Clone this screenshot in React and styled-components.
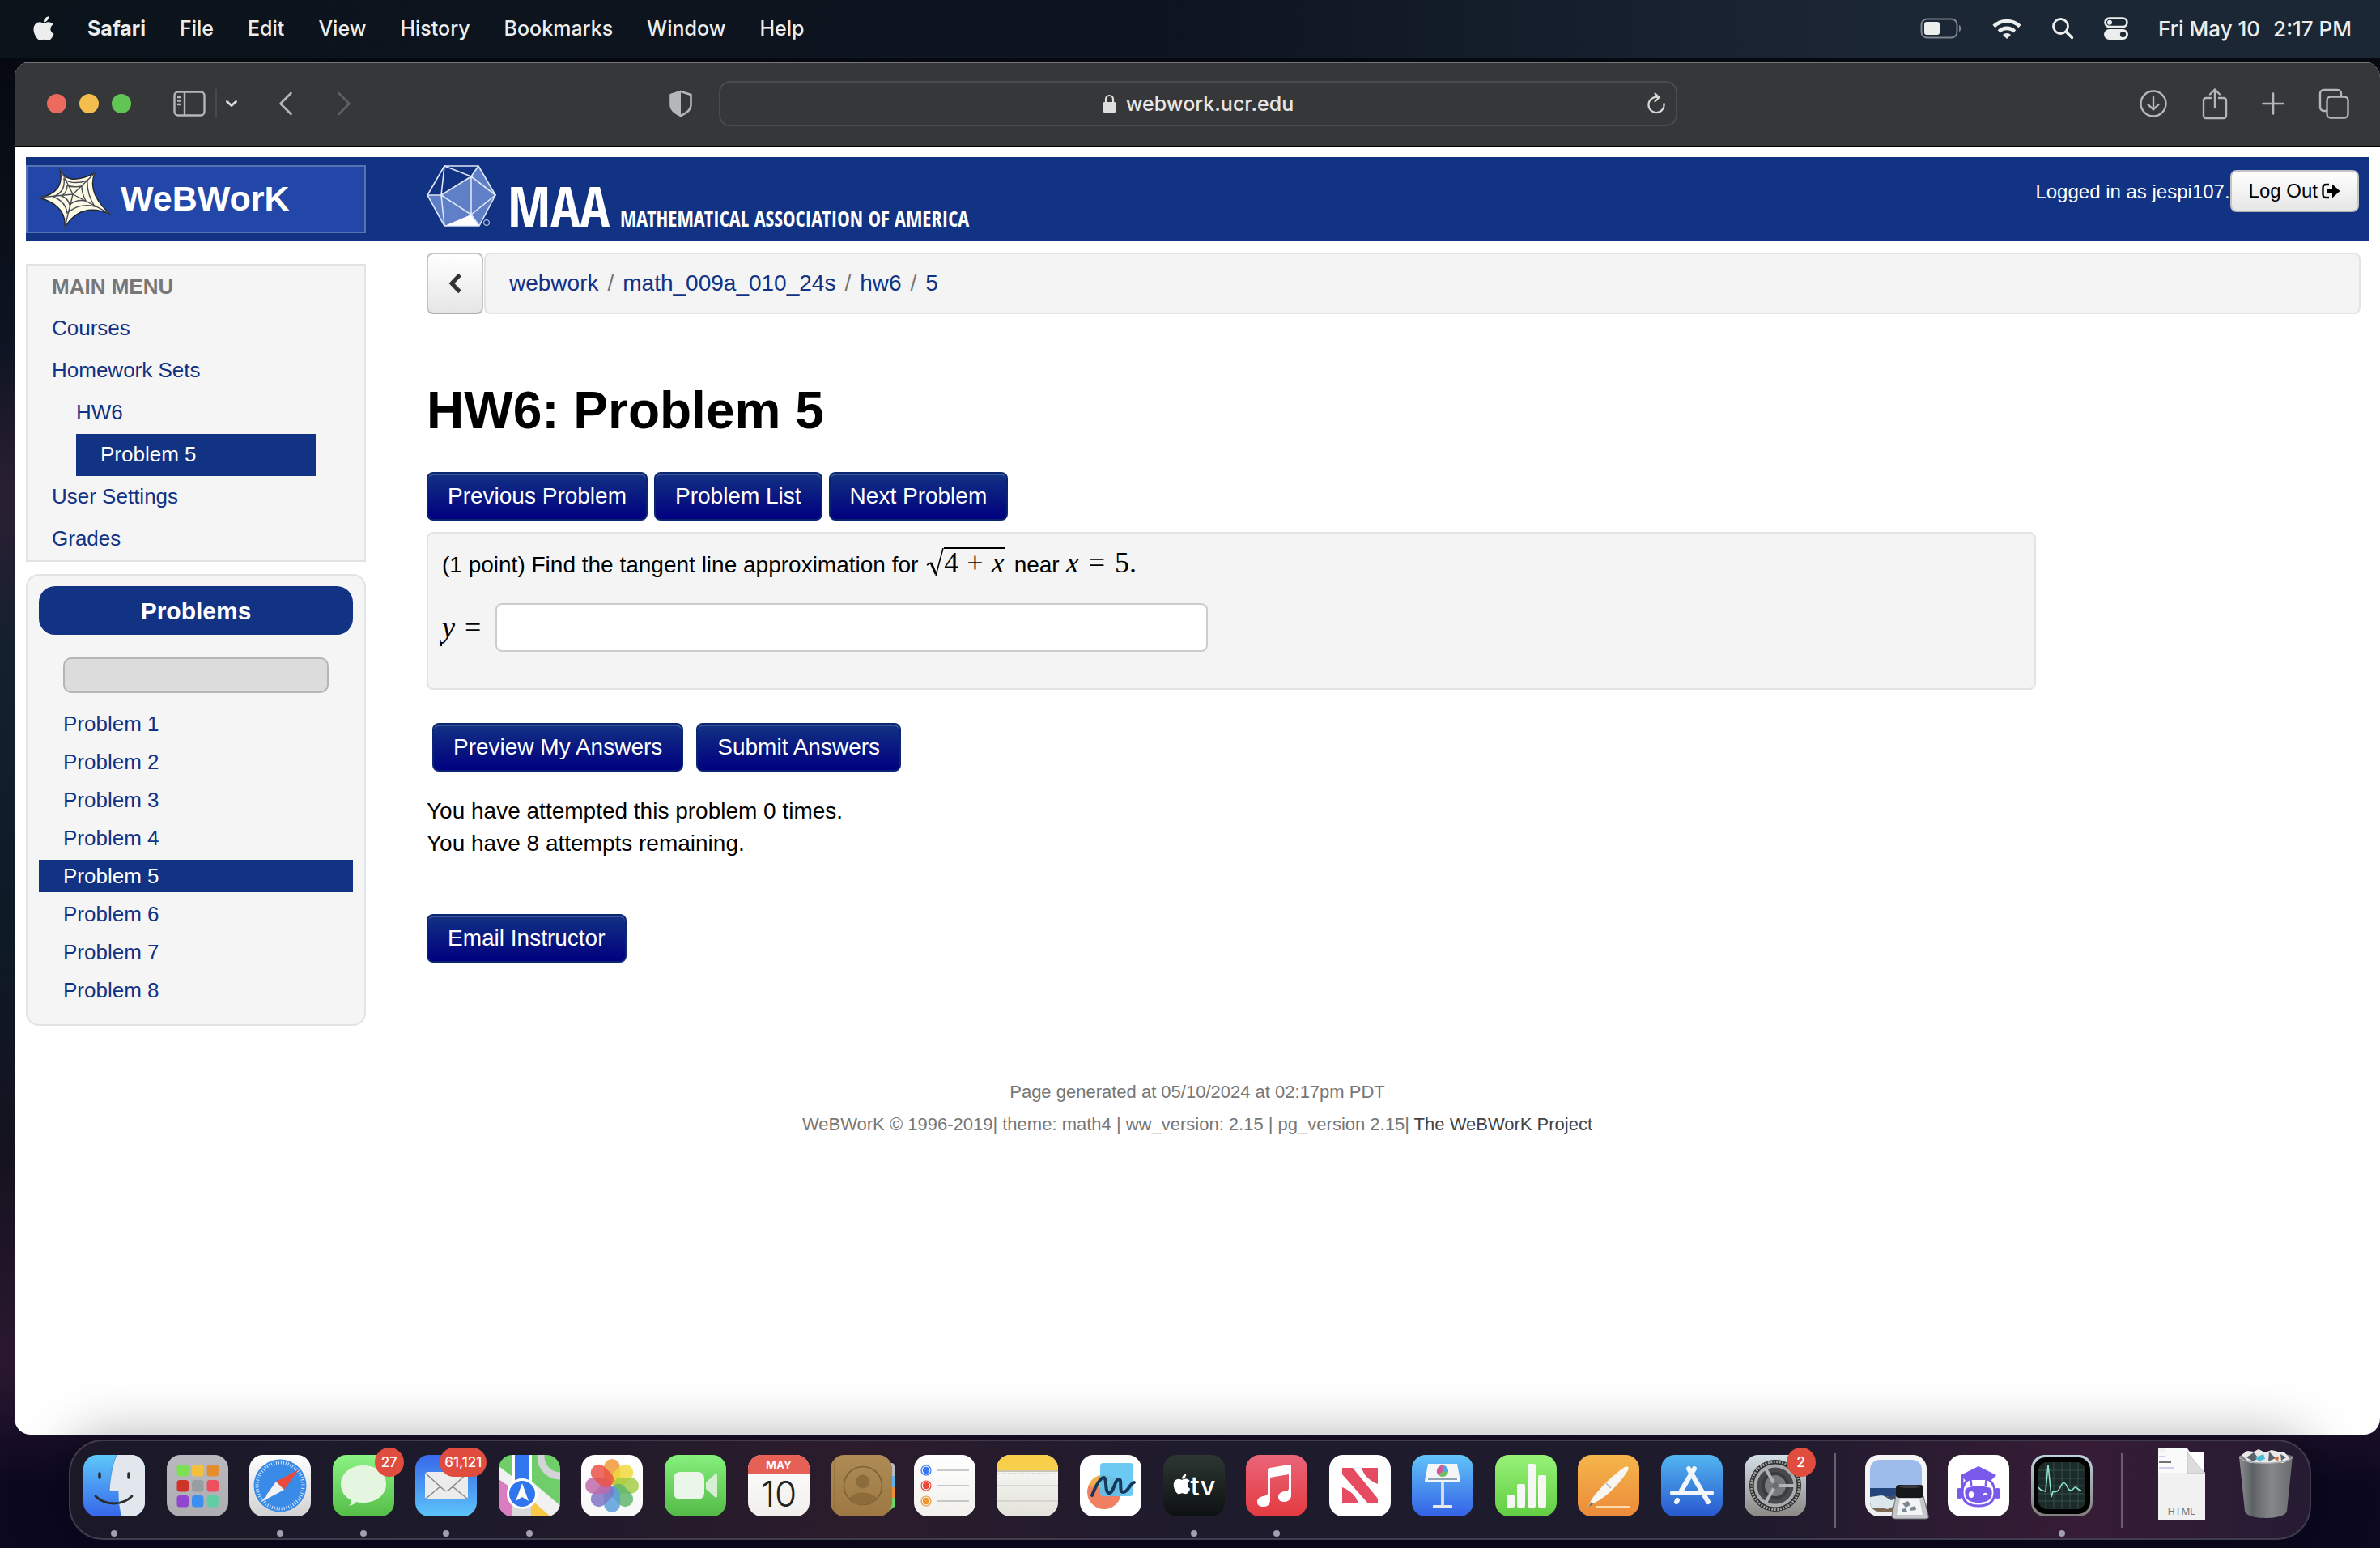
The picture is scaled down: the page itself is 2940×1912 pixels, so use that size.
import React from "react";
import styled, { createGlobalStyle, css } from "styled-components";
import { FaApple } from "react-icons/fa";

const NAVY = "#123283";
const HELV = `"Liberation Sans", Arial, sans-serif`;
const SYSTEM = `Inter, Roboto, sans-serif`;
const MATH = `"Liberation Serif", "Times New Roman", serif`;

const menus = ["File", "Edit", "View", "History", "Bookmarks", "Window", "Help"];
const problems = [1, 2, 3, 4, 5, 6, 7, 8];

const App = () => {
  return (
    <Desktop>
      <GlobalStyle />
      <MenuBar />
      <Browser>
        <BrowserToolbar />
        <Page>
          <Masthead />
          <Columns>
            <Sidebar />
            <ProblemPage />
          </Columns>
          <Footer>
            <p>Page generated at 05/10/2024 at 02:17pm PDT</p>
            <p>
              WeBWorK © 1996-2019| theme: math4 | ww_version: 2.15 | pg_version
              2.15| <a href='#project'>The WeBWorK Project</a>
            </p>
          </Footer>
        </Page>
      </Browser>
      <Dock />
    </Desktop>
  );
};

const MenuBar = () => (
  <TopBar>
    <AppleButton aria-label='Apple menu'>
      <FaApple />
    </AppleButton>
    <MenuItem $bold>Safari</MenuItem>
    {menus.map((name) => (
      <MenuItem key={name}>{name}</MenuItem>
    ))}
    <StatusArea>
      <svg width='52' height='26' viewBox='0 0 52 26'>
        <rect x='1.5' y='1.5' width='44' height='23' rx='7' fill='none' stroke='#7d858f' strokeWidth='2' />
        <rect x='5' y='5' width='19' height='16' rx='3' fill='#eceded' />
        <path d='M48 9v8c3-1 3-7 0-8z' fill='#7d858f' />
      </svg>
      <svg width='36' height='27' viewBox='0 0 36 27' fill='none' stroke='#eceded' strokeWidth='4.6'>
        <path d='M2 10.5a23 23 0 0 1 32 0' />
        <path d='M8.3 16.8a14 14 0 0 1 19.4 0' />
        <path d='M18 26l-5-5a7 7 0 0 1 10 0z' fill='#eceded' stroke='none' />
      </svg>
      <svg width='28' height='28' viewBox='0 0 28 28' fill='none' stroke='#eceded' strokeWidth='2.8' strokeLinecap='round'>
        <circle cx='11.5' cy='11.5' r='9' />
        <path d='M18.5 18.5l7 7' strokeWidth='3.4' />
      </svg>
      <svg width='30' height='28' viewBox='0 0 30 28'>
        <rect x='1.5' y='1.5' width='27' height='10.5' rx='5.2' fill='none' stroke='#eceded' strokeWidth='2.6' />
        <circle cx='7' cy='6.8' r='3' fill='#eceded' />
        <rect y='15' width='30' height='13' rx='6.5' fill='#eceded' />
        <circle cx='23.5' cy='21.5' r='3.6' fill='#1c2736' />
      </svg>
      <Clock>
        <span>Fri May 10</span>
        <span>2:17 PM</span>
      </Clock>
    </StatusArea>
  </TopBar>
);

const BrowserToolbar = () => (
  <Toolbar>
    <ToolSide>
      <Lights>
        <Light $color='#ec6a5e' aria-label='Close' />
        <Light $color='#f4be4f' aria-label='Minimize' />
        <Light $color='#61c554' aria-label='Zoom' />
      </Lights>
      <ToolButton aria-label='Sidebar'>
        <svg width='40' height='32' viewBox='0 0 40 32' fill='none' stroke='#b5b6b7' strokeWidth='2.4'>
          <rect x='1.5' y='1.5' width='37' height='29' rx='4.5' />
          <path d='M14 2v28M5 8h5M5 12.5h5M5 17h5' />
        </svg>
      </ToolButton>
      <ToolDivider />
      <ToolButton aria-label='Tab groups'>
        <svg width='16' height='10' viewBox='0 0 16 10' fill='none' stroke='#d6d7d7' strokeWidth='3' strokeLinecap='round' strokeLinejoin='round'>
          <path d='M2.5 2.5l5.5 5 5.5-5' />
        </svg>
      </ToolButton>
      <NavPair>
        <ToolButton aria-label='Back'>
          <svg width='18' height='30' viewBox='0 0 18 30' fill='none' stroke='#b5b6b7' strokeWidth='2.6' strokeLinecap='round' strokeLinejoin='round'>
            <path d='M15.5 2L2.5 15l13 13' />
          </svg>
        </ToolButton>
        <ToolButton aria-label='Forward'>
          <svg width='18' height='30' viewBox='0 0 18 30' fill='none' stroke='#5f6061' strokeWidth='2.6' strokeLinecap='round' strokeLinejoin='round'>
            <path d='M2.5 2l13 13-13 13' />
          </svg>
        </ToolButton>
      </NavPair>
      <ShieldButton aria-label='Privacy report'>
        <svg width='30' height='34' viewBox='0 0 30 34'>
          <path d='M15 2L2.5 6v13c0 6 6 10 12.5 13 6.5-3 12.5-7 12.5-13V6z' fill='none' stroke='#b5b6b7' strokeWidth='2.6' strokeLinejoin='round' />
          <path d='M15 2L2.5 6v13c0 6 6 10 12.5 13z' fill='#b5b6b7' />
        </svg>
      </ShieldButton>
    </ToolSide>
    <AddressBar>
      <Address>
        <svg width='17' height='24' viewBox='0 0 17 24'>
          <rect y='10' width='17' height='13' rx='2.5' fill='#dedede' />
          <path d='M4 11V6.5a4.5 4.5 0 0 1 9 0V11' fill='none' stroke='#dedede' strokeWidth='2.2' />
        </svg>
        webwork.ucr.edu
      </Address>
      <ToolButton aria-label='Reload'>
        <svg width='24' height='28' viewBox='0 0 24 28' fill='none' stroke='#d6d7d7' strokeWidth='2.2' strokeLinecap='round' strokeLinejoin='round'>
          <path d='M13.5 6A9.6 9.6 0 1 0 21.5 14' />
          <path d='M10.5 1.5L15.5 6.2l-5 5' />
        </svg>
      </ToolButton>
    </AddressBar>
    <ToolSide $end>
      <ToolButton aria-label='Downloads'>
        <svg width='36' height='36' viewBox='0 0 36 36' fill='none' stroke='#b5b6b7' strokeWidth='2.4' strokeLinecap='round' strokeLinejoin='round'>
          <circle cx='18' cy='18' r='15.5' />
          <path d='M18 10v15M11.5 19l6.5 6.5 6.5-6.5' />
        </svg>
      </ToolButton>
      <ToolButton aria-label='Share'>
        <svg width='32' height='40' viewBox='0 0 32 40' fill='none' stroke='#b5b6b7' strokeWidth='2.4' strokeLinecap='round' strokeLinejoin='round'>
          <path d='M11 13H5a3 3 0 0 0-3 3v19a3 3 0 0 0 3 3h22a3 3 0 0 0 3-3V16a3 3 0 0 0-3-3h-6' />
          <path d='M16 25V2.5M10 8.5l6-6 6 6' />
        </svg>
      </ToolButton>
      <ToolButton aria-label='New tab'>
        <svg width='28' height='28' viewBox='0 0 28 28' fill='none' stroke='#b5b6b7' strokeWidth='2.6' strokeLinecap='round'>
          <path d='M14 1.5v25M1.5 14h25' />
        </svg>
      </ToolButton>
      <ToolButton aria-label='Tab overview'>
        <svg width='38' height='38' viewBox='0 0 38 38' fill='none' stroke='#b5b6b7' strokeWidth='2.4'>
          <rect x='10.5' y='10.5' width='26' height='26' rx='4.5' />
          <path d='M10 28H6.5A4.5 4.5 0 0 1 2 23.5V6.5A4.5 4.5 0 0 1 6.5 2h17A4.5 4.5 0 0 1 28 6.5V10' />
        </svg>
      </ToolButton>
    </ToolSide>
  </Toolbar>
);

const Masthead = () => (
  <Banner>
    <Brand href='#home'>
      <svg width='90' height='76' viewBox='0 0 90 76'>
        <path
          d='M27 1Q34 24 70 7Q60 32 89 57Q52 42 33 74Q36 47 1 37Q34 32 27 1z'
          fill='#fbfbe6'
          stroke='#22232b'
          strokeWidth='1.4'
          strokeLinejoin='round'
        />
        <g fill='none' stroke='#4a4c55' strokeWidth='1.4'>
          <path d='M43 33L27 1M43 33L70 7M43 33l46 24M43 33L33 74M43 33L1 37' />
          <path d='M32 14Q42 22 61 16Q60 32 70 48Q52 43 36 56Q34 42 19 36Q34 30 32 14z' />
          <path d='M36 22Q44 25 54 23Q54 32 59 41Q47 39 39 46Q37 38 29 35Q36 31 36 22z' />
        </g>
      </svg>
      WeBWorK
    </Brand>
    <Association href='#maa'>
      <svg width='92' height='76' viewBox='0 0 92 76' strokeLinejoin='round'>
        <path d='M18 37L55 14 64 1 85 37 65 75H22L1 37z' fill='#5f7fc6' />
        <path d='M22 75L55 61l10 14z' fill='#fff' />
        <g fill='none' stroke='#dfe6f6' strokeWidth='1.6'>
          <path d='M22 1h42l21 36-20 38H22L1 37z' />
          <path d='M22 1l33 13L64 1M22 1l-4 36H1M55 14L18 37l4 38M18 37l37 24V14l30 23-30 24 10 14' />
          <circle cx='74' cy='71' r='3.5' strokeWidth='1' />
        </g>
      </svg>
      <Maa>MAA</Maa>
      <Tagline>MATHEMATICAL ASSOCIATION OF AMERICA</Tagline>
    </Association>
    <Login>
      Logged in as jespi107.
      <LogOut>
        Log Out
        <svg width='23' height='20' viewBox='0 0 23 20'>
          <path d='M9 2H5a3.5 3.5 0 0 0-3.5 3.5v9A3.5 3.5 0 0 0 5 18h4' fill='none' stroke='#000' strokeWidth='2.4' />
          <path d='M6 7h7V1.5l9.5 8.5-9.5 8.5V13H6z' />
        </svg>
      </LogOut>
    </Login>
  </Banner>
);

const Sidebar = () => (
  <Aside>
    <MainMenu>
      <h2>MAIN MENU</h2>
      <MenuLink href='#courses'>Courses</MenuLink>
      <MenuLink href='#sets'>Homework Sets</MenuLink>
      <MenuLink href='#hw6' $level={1}>
        HW6
      </MenuLink>
      <MenuLink href='#hw6-5' $level={2}>
        Problem 5
      </MenuLink>
      <MenuLink href='#settings'>User Settings</MenuLink>
      <MenuLink href='#grades'>Grades</MenuLink>
    </MainMenu>
    <ProblemsBox>
      <h2>Problems</h2>
      <Progress role='progressbar' aria-label='Progress' aria-valuenow={0} />
      <ProblemList>
        {problems.map((n) => (
          <ProblemLink key={n} href={`#problem-${n}`} $active={n === 5}>
            Problem {n}
          </ProblemLink>
        ))}
      </ProblemList>
    </ProblemsBox>
  </Aside>
);

const ProblemPage = () => (
  <Main>
    <CrumbRow>
      <UpButton aria-label='Up'>
        <svg width='18' height='26' viewBox='0 0 18 26' fill='none' stroke='#333' strokeWidth='5'>
          <path d='M15 2.5L5 13l10 10.5' />
        </svg>
      </UpButton>
      <Crumbs>
        <a href='#webwork'>webwork</a>
        <span>/</span>
        <a href='#course'>math_009a_010_24s</a>
        <span>/</span>
        <a href='#set'>hw6</a>
        <span>/</span>
        <a href='#problem'>5</a>
      </Crumbs>
    </CrumbRow>
    <Title>HW6: Problem 5</Title>
    <ButtonRow>
      <BlueButton>Previous Problem</BlueButton>
      <BlueButton>Problem List</BlueButton>
      <BlueButton>Next Problem</BlueButton>
    </ButtonRow>
    <ProblemPanel>
      <Question>
        (1 point) Find the tangent line approximation for
        <Root>
          <svg width='22' height='36' viewBox='0 0 22 36' fill='none' stroke='#000'>
            <path d='M1 22l5-3' strokeWidth='1.5' />
            <path d='M6 19l6 14' strokeWidth='3' />
            <path d='M12 35L21 1' strokeWidth='1.5' />
          </svg>
          <Radicand>
            4 <b>+</b> <i>x</i>
          </Radicand>
        </Root>
        near
        <Formula>
          <i>x</i> <b>=</b> 5.
        </Formula>
      </Question>
      <Answer>
        <label htmlFor='answer'>
          <i>y</i> <b>=</b>
        </label>
        <input id='answer' type='text' />
      </Answer>
    </ProblemPanel>
    <ButtonRow $wide>
      <BlueButton>Preview My Answers</BlueButton>
      <BlueButton>Submit Answers</BlueButton>
    </ButtonRow>
    <Attempts>
      You have attempted this problem 0 times.
      <br />
      You have 8 attempts remaining.
    </Attempts>
    <ButtonRow>
      <BlueButton>Email Instructor</BlueButton>
    </ButtonRow>
  </Main>
);

/* ---------- dock ---------- */

const Fill = ({ id, from, to }) => (
  <>
    <defs>
      <linearGradient id={id} x1='0' y1='0' x2='0' y2='1'>
        <stop offset='0' stopColor={from} />
        <stop offset='1' stopColor={to} />
      </linearGradient>
    </defs>
    <rect width='76' height='76' rx='17' fill={`url(#${id})`} />
  </>
);

const Finder = () => (
  <>
    <Fill id='finder' from='#5ec8fa' to='#3667ea' />
    <path d='M41 0h18a17 17 0 0 1 17 17v42a17 17 0 0 1-17 17H47c-3-10-4-20-4-31H32C33 27 36 12 41 0z' fill='#e2e7ee' />
    <path d='M20 23v5M56 23v5' stroke='#2b2b2b' strokeWidth='3.5' strokeLinecap='round' />
    <path d='M15 51c12 12 33 12 45 0' fill='none' stroke='#2b2b2b' strokeWidth='2.8' strokeLinecap='round' />
    <path d='M41 0C36 12 33 27 32 45h11c0 11 1 21 4 31' fill='none' stroke='#3f87d8' strokeWidth='.8' />
  </>
);

const launchColors = ["#7be054", "#f4bf3c", "#e58b30", "#cf3429", "#979da1", "#ee5060", "#9146cf", "#3b8ff0", "#62cda4"];
const Launchpad = () => (
  <>
    <Fill id='launch' from='#b9b9bf' to='#adadb2' />
    {launchColors.map((c, i) => (
      <rect key={c} x={12.5 + (i % 3) * 18.5} y={12 + Math.floor(i / 3) * 19} width='14.5' height='14.5' rx='3.5' fill={c} />
    ))}
  </>
);

const Safari = () => (
  <>
    <Fill id='safari' from='#ffffff' to='#d2d2d2' />
    <circle cx='38' cy='38' r='32.5' fill='#3a8be8' />
    <circle cx='38' cy='38' r='28.5' fill='none' stroke='#d8e8fb' strokeWidth='4' strokeDasharray='1 2' />
    <path d='M61 18L43 43 33 33z' fill='#ea4a3e' />
    <path d='M15 58l18-25 10 10z' fill='#f2f2f2' />
  </>
);

const Messages = () => (
  <>
    <Fill id='msg' from='#8bf384' to='#55bd47' />
    <path d='M38 13c16 0 28 10 28 23S54 59 38 59c-3 0-6 0-9-1-2 3-5 4-9 5 2-2 3-4 3-7C15 52 10 45 10 36c0-13 12-23 28-23z' fill='#e4f6e0' />
  </>
);

const Mail = () => (
  <>
    <Fill id='mail' from='#3868ea' to='#5cc4fa' />
    <rect x='12' y='21' width='53' height='34' rx='4' fill='#ececec' />
    <path d='M13 23l22 20c2 2 5 2 7 0l22-20M13 54l18-15M64 54L46 39' fill='none' stroke='#85888c' strokeWidth='1.5' />
  </>
);

const Maps = () => (
  <>
    <defs>
      <clipPath id='mapclip'>
        <rect width='76' height='76' rx='17' />
      </clipPath>
    </defs>
    <g clipPath='url(#mapclip)'>
      <rect width='76' height='76' fill='#6fce69' />
      <path d='M0 14l16 12v50H0z' fill='#f1f1f1' />
      <path d='M0 30l20 14v32H0z' fill='#da7cc0' />
      <path d='M40 32l40 34v14H62L40 54z' fill='#f1f1f1' />
      <path d='M40 55l24 21H40z' fill='#f6ca46' />
      <path d='M16 44h24v32H16z' fill='#d9d9dc' />
      <circle cx='76' cy='2' r='24' fill='none' stroke='#d3d4d8' strokeWidth='9' />
      <rect x='17' y='-2' width='24' height='40' fill='#fff' />
      <rect x='20' y='-2' width='18' height='40' fill='#3277f0' />
      <circle cx='29' cy='48' r='19' fill='#fff' />
      <circle cx='29' cy='48' r='16' fill='#2f75ee' />
      <path d='M29 35l8 22-8-5-8 5z' fill='#fff' />
    </g>
  </>
);

const petals = ["#f09a37", "#f0d83c", "#a5cc44", "#62b66e", "#5a9fdc", "#8076c4", "#c069ab", "#ea5346"];
const Photos = () => (
  <>
    <Fill id='photos' from='#ffffff' to='#f7f7f7' />
    {petals.map((c, i) => (
      <rect key={c} x='28' y='5' width='20' height='32' rx='10' fill={c} opacity='.85' transform={`rotate(${i * 45} 38 38)`} />
    ))}
  </>
);

const FaceTime = () => (
  <>
    <Fill id='facetime' from='#85f07c' to='#54ba47' />
    <rect x='11' y='21' width='38' height='34' rx='8' fill='#eaf7e8' />
    <path d='M51 34l11-10c1-1 3-1 3 1v26c0 2-2 2-3 1L51 42z' fill='#d6eed2' />
  </>
);

const Calendar = () => (
  <>
    <Fill id='cal' from='#ffffff' to='#f0efec' />
    <path d='M0 23v-6A17 17 0 0 1 17 0h42a17 17 0 0 1 17 17v6z' fill='#e66056' />
    <IconText x='38' y='18' $size={14} $weight={600} fill='#fff'>
      MAY
    </IconText>
    <IconText x='38' y='64' $size={44} $weight={300} fill='#222'>
      10
    </IconText>
  </>
);

const Contacts = () => (
  <>
    <path d='M70 10h5a4 4 0 0 1 4 4v12h-9z' fill='#b9babb' />
    <path d='M70 26h9v14h-9z' fill='#5fb2ee' />
    <path d='M70 40h9v13h-9z' fill='#f08e33' />
    <path d='M70 53h9v11l-5 4h-4z' fill='#6bd768' />
    <Fill id='contacts' from='#ae8b55' to='#9d7843' />
    <path d='M5 6v64' stroke='#886836' />
    <circle cx='40' cy='38' r='23.5' fill='none' stroke='#7f6133' strokeWidth='1.6' />
    <circle cx='40' cy='33' r='8.5' fill='#8c6c3b' />
    <path d='M23 54c6-10 28-10 34 0-8 10-26 10-34 0z' fill='#8c6c3b' />
  </>
);

const Reminders = () => (
  <>
    <Fill id='remind' from='#ffffff' to='#f1f0ec' />
    {["#3478f6", "#e8493d", "#ed9633"].map((c, i) => (
      <g key={c}>
        <circle cx='15' cy={19 + i * 19} r='4.2' fill={c} />
        <circle cx='15' cy={19 + i * 19} r='6' fill='none' stroke={c} strokeWidth='1.2' />
        <path d={`M29 ${19 + i * 19}h39`} stroke='#b9b9bd' strokeWidth='1.6' />
      </g>
    ))}
  </>
);

const Notes = () => (
  <>
    <Fill id='notes' from='#fbfbf9' to='#e3e2da' />
    <path d='M0 19v-2A17 17 0 0 1 17 0h42a17 17 0 0 1 17 17v2z' fill='#f8cf4a' />
    <path d='M0 20h76' stroke='#bdb499' strokeWidth='1.5' />
    <path d='M2 23h72' stroke='#c5c4bf' strokeWidth='1.5' strokeDasharray='1.5 1.5' />
    <path d='M0 38h76M0 57h76' stroke='#cfcecb' strokeWidth='1.5' />
  </>
);

const Freeform = () => (
  <>
    <Fill id='free' from='#ffffff' to='#ffffff' />
    <circle cx='30' cy='46' r='21' fill='#f08062' />
    <path d='M10 39a21 21 0 0 1 32-11v14z' fill='#f4ad4a' />
    <rect x='25' y='10' width='41' height='41' rx='4' fill='#5bc3f1' opacity='.9' />
    <path d='M15 50c4-10 9-21 14-22s1 19 7 19 7-17 12-17-1 17 6 16c6-1 8-11 13-12' fill='none' stroke='#16395b' strokeWidth='4' strokeLinecap='round' />
  </>
);

const AppleTv = () => (
  <>
    <Fill id='tv' from='#2c3733' to='#0d1011' />
    <g transform='translate(9 22)'>
      <FaApple size='28' color='#fff' />
    </g>
    <IconText x='49' y='50' $size={33} $weight={500} fill='#fff'>
      tv
    </IconText>
  </>
);

const Music = () => (
  <>
    <Fill id='music' from='#ea6579' to='#e33a40' />
    <path d='M27 19c0-2 1-3 3-3l23-4c2 0 3 0 3 2v36c0 5-4 8-9 8s-7-3-7-6c0-4 3-6 7-7 4 0 6-1 6-4V24l-23 4v28c0 5-3 8-8 8s-8-2-8-6 3-6 7-7 6-1 6-4z' fill='#fff' />
  </>
);

const News = () => (
  <>
    <Fill id='news' from='#ffffff' to='#ffffff' />
    <path d='M16 16h13l31 38v6H48L16 24zM40 16h20v20C50 32 43 26 40 16zM16 40c10 4 17 10 20 20H16z' fill='#e64c61' />
  </>
);

const Keynote = () => (
  <>
    <Fill id='keynote' from='#62c3f9' to='#3462e6' />
    <path d='M20 11h36l4 21a2 2 0 0 1-2 2H18a2 2 0 0 1-2-2z' fill='#f4f5f7' />
    <path d='M20 29h36v2H20z' fill='#8fa3b5' />
    <circle cx='38' cy='20' r='7' fill='#72bd62' />
    <path d='M38 20v-7a7 7 0 0 1 7 8z' fill='#48a7ea' />
    <path d='M38 20l-5 5a7 7 0 0 1 5-12z' fill='#d4559b' />
    <path d='M36 34h4v28h-4z' fill='#d7dbe0' />
    <rect x='26' y='62' width='24' height='4' rx='1' fill='#e6e8ea' />
  </>
);

const Numbers = () => (
  <>
    <Fill id='numbers' from='#97f277' to='#62cd43' />
    <g fill='#f5f8f3'>
      <rect x='14' y='49' width='10' height='16' rx='2' />
      <rect x='27' y='36' width='10' height='29' rx='2' />
      <rect x='40' y='11' width='10' height='54' rx='2' />
      <rect x='53' y='25' width='10' height='40' rx='2' />
    </g>
  </>
);

const Pages = () => (
  <>
    <Fill id='pages' from='#f5b64b' to='#ec8a39' />
    <path d='M58 15c3-2 6 0 4 4-9 15-26 33-41 40l-8 5 4-9C26 42 43 25 58 15z' fill='#f7f6f3' />
    <path d='M35 35l6 6' stroke='#b6b1a8' strokeWidth='1.5' />
    <path d='M13 64l4-6 2 3z' fill='#6d6861' />
    <path d='M22 64h42' stroke='#fbdcae' strokeWidth='2' />
  </>
);

const AppStore = () => (
  <>
    <Fill id='store' from='#52b5f0' to='#2858cf' />
    <g stroke='#f2f6fb' strokeWidth='6' strokeLinecap='round'>
      <path d='M41 17L25 44M34 17l24 41M14 47h48M20 56l-1 2' />
    </g>
  </>
);

const Settings = () => (
  <>
    <Fill id='settings' from='#d3dfe6' to='#8b8984' />
    <circle cx='38' cy='38' r='32' fill='#2e2f31' />
    <circle cx='38' cy='38' r='29.5' fill='none' stroke='#9ea0a1' strokeWidth='3' strokeDasharray='2 1.5' />
    <circle cx='38' cy='38' r='24.5' fill='#48494c' stroke='#a9abad' strokeWidth='4' />
    <circle cx='38' cy='38' r='15' fill='#77797c' stroke='#3a3b3d' strokeWidth='4' />
    <path d='M38 38h24M38 38L26 17M38 38L26 59' stroke='#b1b3b5' strokeWidth='4' />
    <circle cx='38' cy='38' r='4' fill='#6c6e70' />
  </>
);

const Preview = () => (
  <>
    <Fill id='preview' from='#f6f6f6' to='#eeeeee' />
    <clipPath id='photoclip'>
      <rect x='6' y='6' width='64' height='64' rx='12' />
    </clipPath>
    <g clipPath='url(#photoclip)'>
      <rect width='76' height='76' fill='#9dbcec' />
      <path d='M0 41h76v35H0z' fill='#24467c' />
      <path d='M0 53l20-3 20 4 36-4v26H0z' fill='#dbe7ea' />
      <path d='M6 66l12-1 10 2 8-4 6 9H6z' fill='#7b6a51' />
      <path d='M22 50l8 2 6-3 6 4-10 3z' fill='#44506a' />
    </g>
    <path d='M38 51l-5 24c0 3 2 4 5 4h36c3 0 5-1 4-4l-6-24z' fill='#c5c7cb' stroke='#6c6f75' />
    <path d='M43 54l-4 20h32l-4-20z' fill='#f3f4f6' />
    <path d='M46 60l7-3 3 5-6 3zM55 65l7-2 1 5-8 1zM45 67l5-1 2 4-6 1z' fill='#7d8793' />
    <rect x='38' y='37' width='34' height='16' rx='4' fill='#17181a' />
    <ellipse cx='55' cy='39' rx='14' ry='2' fill='#3a3b3e' />
  </>
);

const Robot = () => (
  <>
    <Fill id='robot' from='#ffffff' to='#ffffff' />
    <g fill='#7a5aea'>
      <path d='M38 14l22 11-8 8H23l-7-8z' />
      <rect x='11' y='41' width='7' height='13' rx='3' />
      <rect x='58' y='41' width='7' height='13' rx='3' />
    </g>
    <path d='M18 46c0-9 5-15 10-17h20c6 3 10 8 10 17 0 12-8 17-20 17s-20-5-20-17z' fill='#fff' stroke='#7a5aea' strokeWidth='3' />
    <path d='M22 42c10-5 22-5 32 0 2 8 0 17-16 17S20 50 22 42z' fill='#7a5aea' />
    <path d='M28 29l1 9M48 29l-1 9' stroke='#7a5aea' strokeWidth='3' />
    <path d='M28 31h20l-1-4H30z' fill='#7a5aea' />
    <path d='M18 26v15' stroke='#7a5aea' strokeWidth='3' />
    <ellipse cx='29' cy='49' rx='3.2' ry='4' fill='#fff' />
    <path d='M44 50c1-3 4-3 5 0' fill='none' stroke='#fff' strokeWidth='2' />
  </>
);

const Activity = () => (
  <>
    <Fill id='activity' from='#bcd3dc' to='#7f7e7b' />
    <rect x='3' y='3' width='70' height='70' rx='15' fill='#000' />
    <rect x='9' y='9' width='58' height='58' rx='10' fill='#1b2b28' />
    <path d='M18 9v58M28 9v58M38 9v58M48 9v58M58 9v58M9 19h58M9 29h58M9 38h58M9 48h58M9 57h58' stroke='#3d5750' strokeWidth='.8' />
    <path d='M9 40c3 5 6 4 9 5l3-33 4 40 2-7c5 2 7-1 10-7s6-3 8 2 5 5 8 1 4 3 9 3' fill='none' stroke='#8fe3cb' strokeWidth='1.6' />
  </>
);

const HtmlFile = () => (
  <>
    <path d='M8 -8h36l22 30v58H8z' fill='#f1f1f1' />
    <path d='M8 -2h5v-2h3v-4h28v30H8z' fill='#fafafa' />
    <path d='M44 -3h20v24l-2 1z' fill='#fff' />
    <path d='M44 -3v23a3 3 0 0 0 3 3h19z' fill='#dcdcdc' stroke='#bbb' strokeWidth='.8' />
    <path d='M9 9h15' stroke='#444' strokeWidth='1.5' />
    <path d='M9 2h8M9 16h18' stroke='#a9a4e6' />
    <IconText x='37' y='74' $size={12} $weight={400} fill='#777'>
      HTML
    </IconText>
  </>
);

const Trash = () => (
  <>
    <defs>
      <linearGradient id='can' x1='0' x2='1' y1='0' y2='0'>
        <stop offset='0' stopColor='#8b8d90' />
        <stop offset='.25' stopColor='#5f6265' />
        <stop offset='.6' stopColor='#85888b' />
        <stop offset='1' stopColor='#6a6c70' />
      </linearGradient>
    </defs>
    <path d='M5 2c4-6 62-6 66 0l-7 67c-1 12-51 12-52 0z' fill='url(#can)' />
    <path d='M8 0l7-5 8 1 6-3 8 4 8-3 8 2 7 0 6 6 2 4-9 4H18z' fill='#e9e9e9' />
    <path d='M14 3l9-6 6 7-7 4zM42-4l8 8-9 4zM56-1l7 4-6 4z' fill='#59616b' />
    <path d='M25 3l10-4 2 6-8 3z' fill='#4bbbd8' />
    <path d='M48 4l6-2-1 6z' fill='#d37036' />
    <path d='M5 2c4 11 62 11 66 0' fill='none' stroke='#a5a7aa' strokeWidth='1.5' />
  </>
);

const apps = [
  { name: "Finder", Art: Finder, open: true },
  { name: "Launchpad", Art: Launchpad },
  { name: "Safari", Art: Safari, open: true },
  { name: "Messages", Art: Messages, open: true, badge: "27" },
  { name: "Mail", Art: Mail, open: true, badge: "61,121" },
  { name: "Maps", Art: Maps, open: true },
  { name: "Photos", Art: Photos },
  { name: "FaceTime", Art: FaceTime },
  { name: "Calendar", Art: Calendar },
  { name: "Contacts", Art: Contacts },
  { name: "Reminders", Art: Reminders },
  { name: "Notes", Art: Notes },
  { name: "Freeform", Art: Freeform },
  { name: "TV", Art: AppleTv, open: true },
  { name: "Music", Art: Music, open: true },
  { name: "News", Art: News },
  { name: "Keynote", Art: Keynote },
  { name: "Numbers", Art: Numbers },
  { name: "Pages", Art: Pages },
  { name: "App Store", Art: AppStore },
  { name: "System Settings", Art: Settings, badge: "2" },
  null,
  { name: "Preview", Art: Preview },
  { name: "Study Bot", Art: Robot },
  { name: "Activity Monitor", Art: Activity, open: true },
  null,
  { name: "Downloads", Art: HtmlFile },
  { name: "Trash", Art: Trash },
];

const Dock = () => (
  <DockBar>
    {apps.map((app, i) =>
      app ? (
        <DockItem key={app.name} aria-label={app.name} $open={app.open}>
          <svg width='76' height='76' viewBox='0 0 76 76' overflow='visible'>
            <app.Art />
          </svg>
          {app.badge && <Badge>{app.badge}</Badge>}
        </DockItem>
      ) : (
        <DockDivider key={i} />
      )
    )}
  </DockBar>
);

/* ---------- styles ---------- */

const GlobalStyle = createGlobalStyle`
  * {
    box-sizing: border-box;
  }
  body {
    margin: 0;
    font-family: ${HELV};
    color: #000;
  }
  h1, h2, p {
    margin: 0;
  }
  a {
    color: ${NAVY};
    text-decoration: none;
  }
  button {
    font: inherit;
    border: 0;
    padding: 0;
    background: none;
  }
  svg {
    flex-shrink: 0;
  }
`;

const Desktop = styled.div`
  min-height: 100vh;
  display: flex;
  flex-direction: column;
  background: linear-gradient(
    #05080d,
    #0a0f18 14%,
    #0d1422 22%,
    #2a1f33 32%,
    #14202e 42%,
    #0d1a26 60%,
    #15121f 75%,
    #2b1830 88%,
    #0b0820 96%
  );
`;

const TopBar = styled.header`
  display: flex;
  align-items: center;
  gap: 42px;
  height: 72px;
  padding: 0 35px 2px 37px;
  background: linear-gradient(90deg, #0b131b, #0e1521 50%, #1c2736 80%);
  color: #eceded;
  font: 500 25px ${SYSTEM};
`;

const AppleButton = styled.button`
  display: flex;
  margin-right: -5px;
  color: inherit;
  font-size: 34px;
`;

const MenuItem = styled.button`
  color: inherit;
  font-weight: ${({ $bold }) => ($bold ? 700 : 500)};
`;

const StatusArea = styled.div`
  display: flex;
  align-items: center;
  gap: 37px;
  margin-left: auto;
`;

const Clock = styled.div`
  display: flex;
  gap: 16px;
  font-size: 26px;
`;

const Browser = styled.div`
  flex: 1;
  display: flex;
  flex-direction: column;
  margin: 4px 0 0 18px;
  border-radius: 20px;
  overflow: hidden;
  background: #fff;
`;

const Toolbar = styled.div`
  display: flex;
  align-items: center;
  height: 106px;
  padding: 0 38px 2px 40px;
  background: #363739;
  border-top: 2px solid #757577;
  border-bottom: 2px solid #000;
`;

const ToolSide = styled.div`
  flex: 1;
  display: flex;
  align-items: center;
  ${({ $end }) =>
    $end &&
    css`
      justify-content: flex-end;
      gap: 42px;
    `}
`;

const Lights = styled.div`
  display: flex;
  gap: 16px;
  margin-right: 52px;
`;

const Light = styled.button`
  width: 24px;
  height: 24px;
  border-radius: 50%;
  background: ${({ $color }) => $color};
`;

const ToolButton = styled.button`
  display: flex;
  align-items: center;
`;

const ToolDivider = styled.span`
  width: 2px;
  height: 36px;
  margin: 0 10px 0 12px;
  background: #48494b;
`;

const NavPair = styled.div`
  display: flex;
  gap: 54px;
  margin-left: 50px;
`;

const ShieldButton = styled(ToolButton)`
  margin: 0 32px 0 auto;
`;

const AddressBar = styled.div`
  flex: 0 1 1184px;
  display: flex;
  align-items: center;
  height: 56px;
  padding: 0 12px 0 36px;
  border: 2px solid #4a4b4d;
  border-radius: 14px;
`;

const Address = styled.div`
  flex: 1;
  display: flex;
  justify-content: center;
  align-items: center;
  gap: 12px;
  color: #e6e6e6;
  font: 500 25px ${SYSTEM};
`;

const Page = styled.div`
  padding: 12px 14px;
`;

const Banner = styled.header`
  display: flex;
  height: 104px;
  padding: 10px 12px 10px 0;
  background: ${NAVY};
  color: #fff;
`;

const Brand = styled.a`
  display: flex;
  align-items: center;
  gap: 12px;
  width: 420px;
  padding: 0 0 2px 13px;
  border: 2px solid #5672b0;
  background: #2347a8;
  color: #fff;
  font-size: 43px;
  font-weight: 700;
`;

const Association = styled.a`
  display: flex;
  align-items: baseline;
  margin-left: 75px;
  color: #fff;
  font-family: "Open Sans Condensed", "Liberation Sans Narrow", "Roboto Condensed", ${HELV};
  font-weight: 700;
  line-height: 76px;
`;

const Maa = styled.span`
  margin: 0 13px 0 8px;
  font-size: 68px;
`;

const Tagline = styled.span`
  font-size: 26px;
`;

const Login = styled.div`
  display: flex;
  align-items: flex-start;
  margin-left: auto;
  padding-top: 6px;
  font-size: 24px;
  line-height: 54px;
`;

const raised = css`
  border: 2px solid #c4c4c4;
  border-bottom-color: #aeaeae;
  border-radius: 8px;
  background: linear-gradient(#fff, #e6e6e6);
`;

const LogOut = styled.button`
  ${raised}
  display: flex;
  align-items: center;
  gap: 5px;
  height: 52px;
  padding: 0 21px;
  color: #000;
  line-height: 40px;
`;

const Columns = styled.div`
  display: flex;
  gap: 75px;
  padding-right: 10px;
`;

const Aside = styled.aside`
  flex: 0 0 420px;
  padding-top: 28px;
  font-size: 26px;
`;

const MainMenu = styled.nav`
  padding: 0 60px 0 30px;
  border: 2px solid #e3e3e3;
  background: #f5f5f5;

  h2 {
    color: #777;
    font-size: 26px;
    line-height: 52px;
  }
`;

const MenuLink = styled.a`
  display: block;
  margin-left: ${({ $level }) => ($level ? 30 : 0)}px;
  padding-bottom: 2px;
  line-height: 50px;
  ${({ $level }) =>
    $level === 2 &&
    css`
      padding-left: 30px;
      background: ${NAVY};
      color: #fff;
    `}
`;

const ProblemsBox = styled.nav`
  margin-top: 15px;
  padding: 13px 14px 22px;
  border: 2px solid #e3e3e3;
  border-radius: 16px;
  background: #f5f5f5;

  h2 {
    padding-top: 2px;
    border-radius: 20px;
    background: ${NAVY};
    color: #fff;
    font-size: 30px;
    line-height: 58px;
    text-align: center;
  }
`;

const Progress = styled.div`
  height: 44px;
  margin: 28px 30px 18px;
  border: 2px solid #b5b5b5;
  border-radius: 10px;
  background: #dcdcdc;
`;

const ProblemList = styled.div`
  display: flex;
  flex-direction: column;
  gap: 7px;
  line-height: 40px;
`;

const ProblemLink = styled.a`
  padding-left: 30px;
  ${({ $active }) =>
    $active &&
    css`
      background: ${NAVY};
      color: #fff;
    `}
`;

const Main = styled.main`
  flex: 1;
  padding-top: 14px;
  font-size: 28px;
`;

const CrumbRow = styled.div`
  display: flex;
  gap: 1px;
  height: 76px;
`;

const UpButton = styled.button`
  ${raised}
  display: flex;
  align-items: center;
  justify-content: center;
  width: 70px;
`;

const Crumbs = styled.nav`
  flex: 1;
  display: flex;
  align-items: center;
  gap: 11px;
  padding-left: 29px;
  border: 2px solid #e3e3e3;
  border-radius: 8px;
  background: #f4f4f4;

  span {
    color: #777;
  }
`;

const Title = styled.h1`
  margin: 79px 0 36px;
  font-size: 64px;
  line-height: 80px;
`;

const ButtonRow = styled.div`
  display: flex;
  gap: ${({ $wide }) => ($wide ? 16 : 8)}px;
  padding-left: ${({ $wide }) => ($wide ? 7 : 0)}px;
`;

const BlueButton = styled.button`
  height: 60px;
  padding: 0 24px;
  border: 2px solid #0a2672;
  border-radius: 8px;
  background: linear-gradient(${NAVY}, #00007f);
  box-shadow: inset 0 2px 0 #3c5597;
  color: #fff;
`;

const ProblemPanel = styled.section`
  width: 83.2%;
  margin: 14px 0 41px;
  padding: 12px 17px 45px;
  border: 2px solid #e3e3e3;
  border-radius: 8px;
  background: #f4f4f4;

  i,
  b {
    font-family: ${MATH};
    font-weight: 400;
  }
`;

const Question = styled.div`
  display: flex;
  align-items: baseline;
  height: 48px;
  line-height: 48px;
`;

const Formula = styled.span`
  display: flex;
  gap: 12px;
  margin-left: 8px;
  font-family: ${MATH};
  font-size: 36px;
`;

const Root = styled.span`
  display: flex;
  align-items: baseline;
  margin: 0 12px 0 10px;

  svg {
    align-self: flex-start;
  }
`;

const Radicand = styled.span`
  display: flex;
  gap: 10px;
  border-top: 2px solid #000;
  font-family: ${MATH};
  font-size: 36px;
  line-height: 34px;
`;

const Answer = styled.div`
  display: flex;
  align-items: center;
  gap: 18px;
  margin-top: 26px;

  label {
    position: relative;
    display: flex;
    align-items: center;
    gap: 12px;
    font-size: 36px;

    &::after {
      content: "";
      position: absolute;
      left: -2px;
      bottom: -2px;
      width: 2px;
      height: 2px;
      background: #000;
    }
  }
  input {
    flex: 0 1 880px;
    height: 60px;
    padding: 0 12px;
    border: 2px solid #ccc;
    border-radius: 8px;
    background: #fff;
    font: 28px ${HELV};
  }
`;

const Attempts = styled.p`
  margin: 29px 0 67px;
  line-height: 40px;
`;

const Footer = styled.footer`
  margin-top: 62px;
  color: #777;
  font-size: 22px;
  line-height: 40px;
  text-align: center;

  a {
    color: #444;
  }
`;

const DockBar = styled.nav`
  position: relative;
  display: flex;
  justify-content: space-between;
  height: 124px;
  margin: 6px 85px 10px;
  padding: 17px 16px;
  border: 2px solid #413c4c;
  border-radius: 42px;
  background: linear-gradient(90deg, #1b1928, #1d1a2b 18%, #2c1c2c 35%, #1e1b2d 50%, #1e1b2d 75%, #371c36 90%, #251b33);
  box-shadow: 0 0 70px rgba(0, 0, 0, 0.35);
`;

const DockItem = styled.button`
  position: relative;
  width: 76px;
  height: 76px;

  svg {
    display: block;
  }
  ${({ $open }) =>
    $open &&
    css`
      &::after {
        content: "";
        position: absolute;
        left: 34px;
        bottom: -25px;
        width: 8px;
        height: 8px;
        border-radius: 50%;
        background: #a29fb3;
      }
    `}
`;

const Badge = styled.span`
  position: absolute;
  top: -9px;
  right: -12px;
  min-width: 36px;
  padding: 0 6px;
  border-radius: 18px;
  background: #e04c3e;
  color: #fff;
  font: 500 17px/36px ${SYSTEM};
  text-align: center;
`;

const DockDivider = styled.span`
  width: 2px;
  height: 92px;
  margin: -2px 9px 0;
  background: #6a5f72;
`;

const IconText = styled.text`
  font-family: ${SYSTEM};
  font-size: ${({ $size }) => $size}px;
  font-weight: ${({ $weight }) => $weight};
  text-anchor: middle;
`;

export default App;
